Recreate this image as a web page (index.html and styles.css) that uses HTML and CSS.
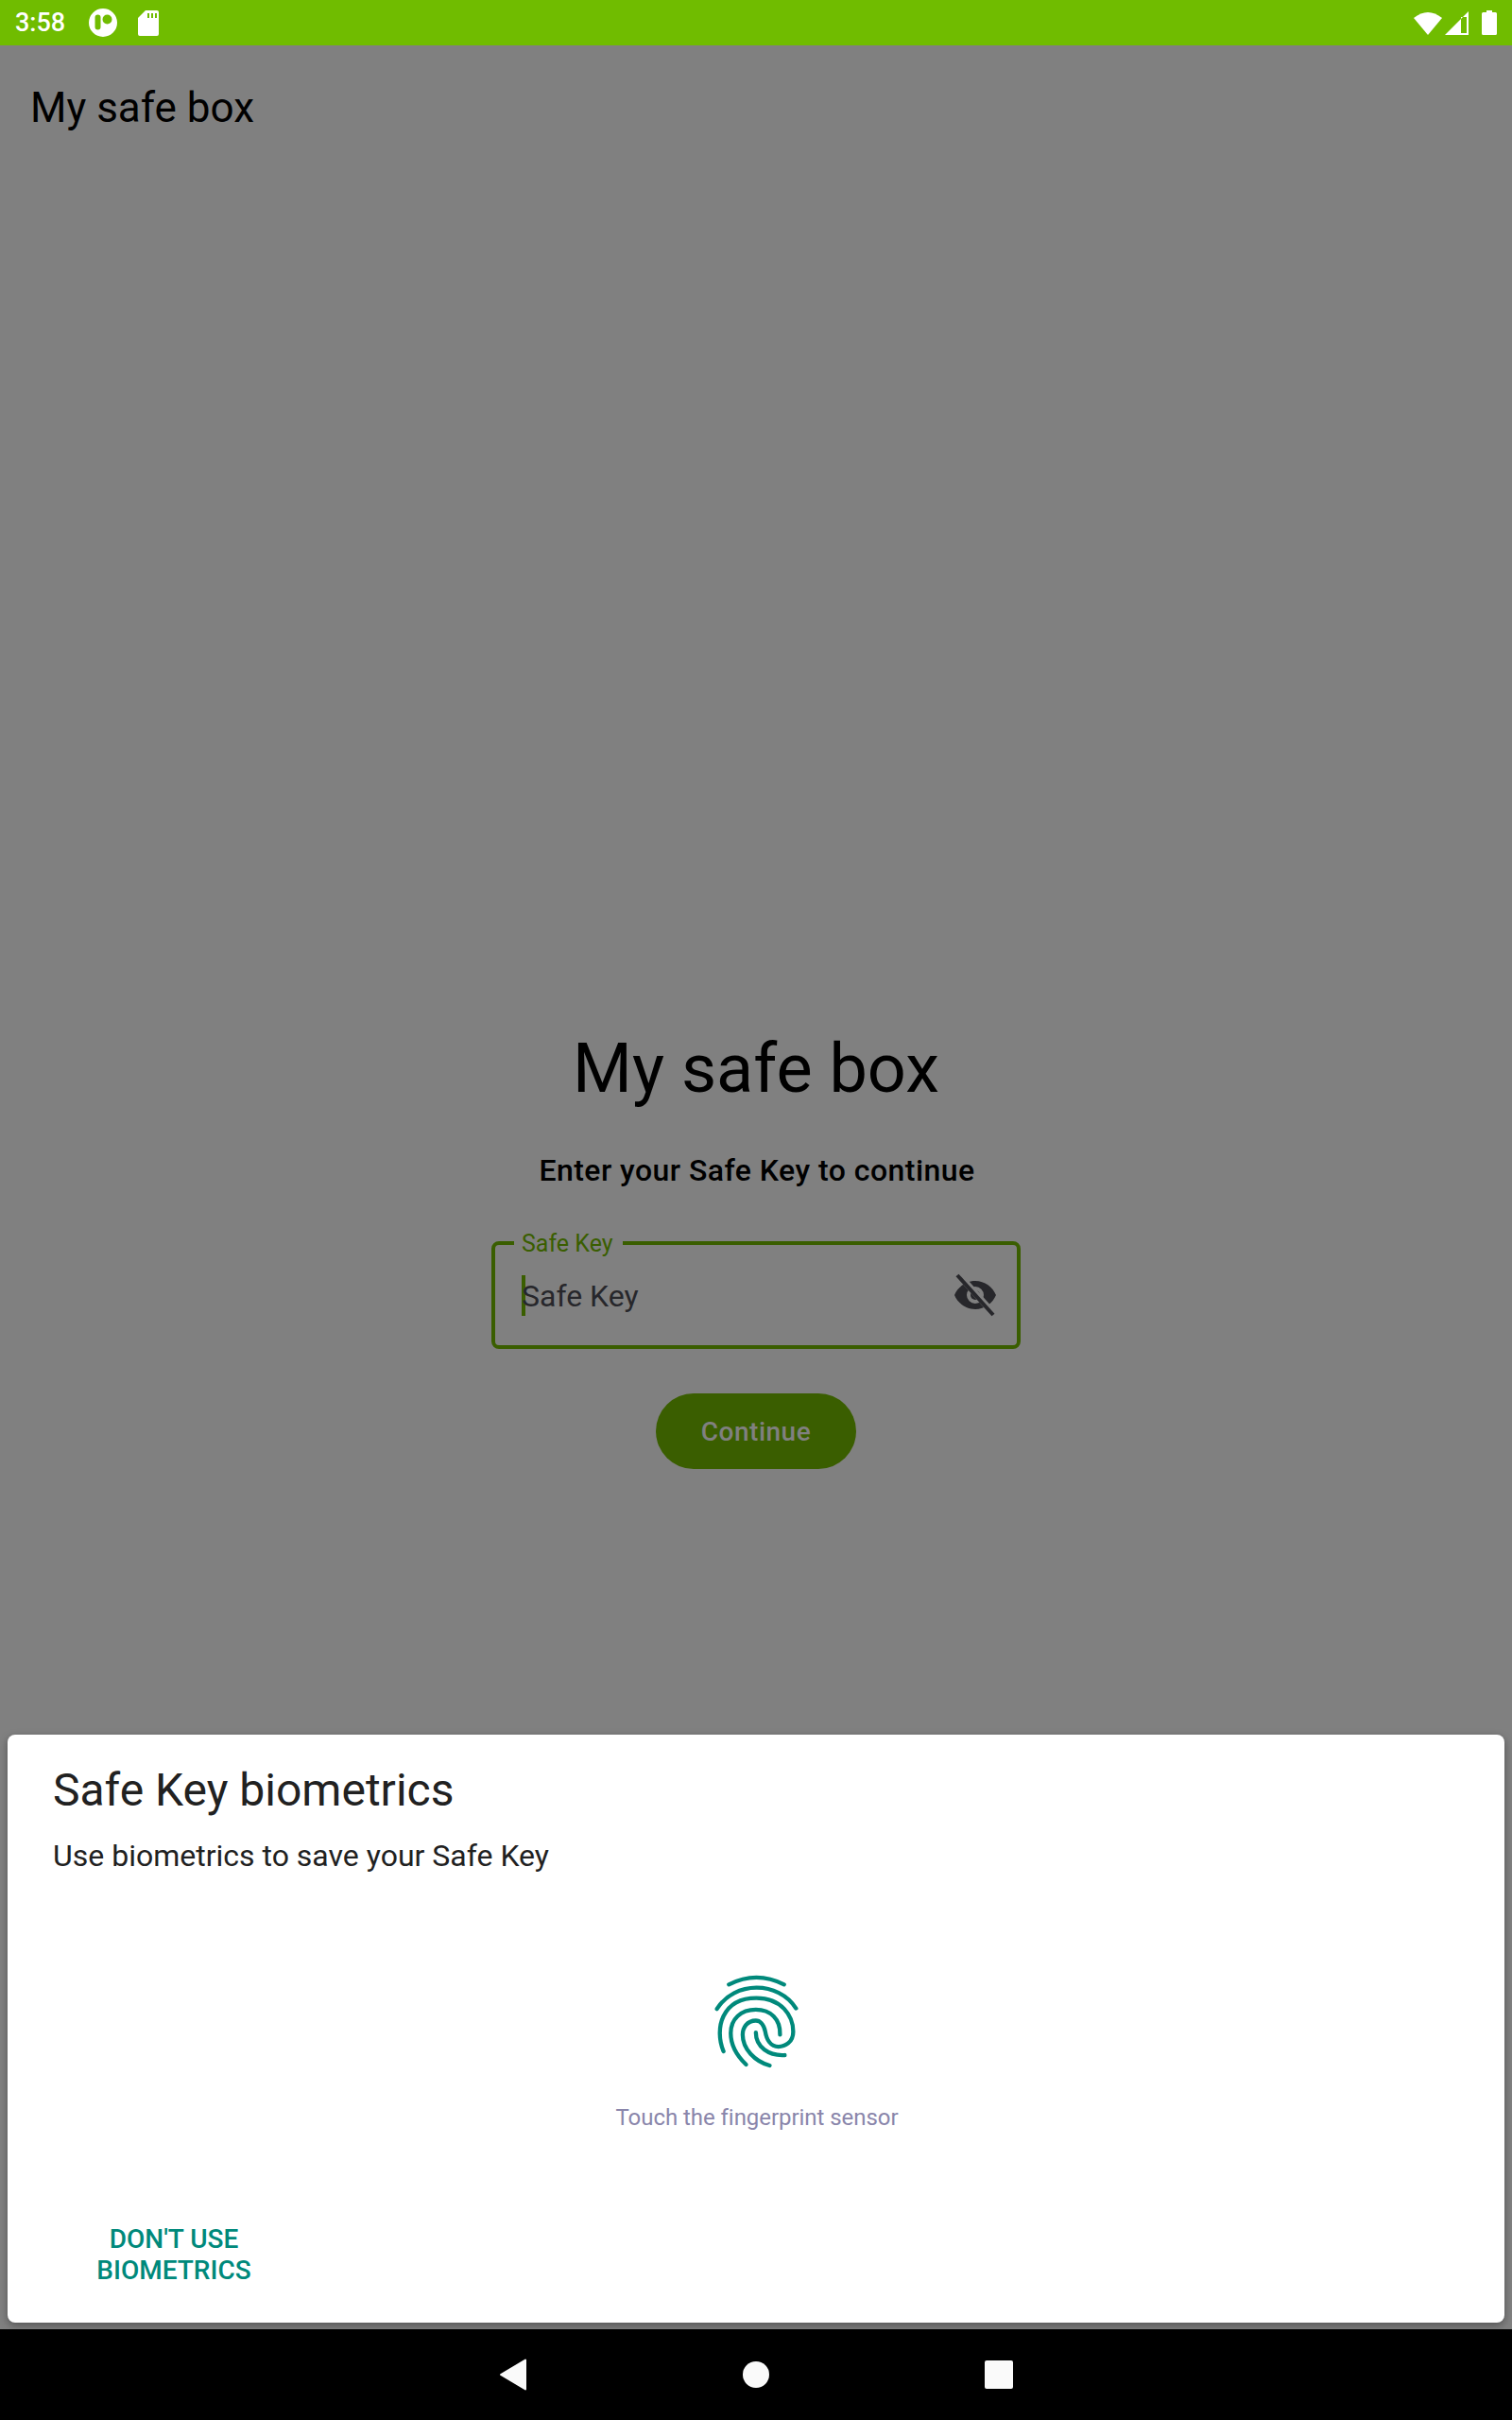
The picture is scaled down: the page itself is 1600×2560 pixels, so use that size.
FILE: index.html
```html
<!DOCTYPE html>
<html lang="en">
<head>
<meta charset="utf-8">
<title>My safe box</title>
<link rel="stylesheet" href="styles.css">
</head>
<body>
<div class="screen">
  <header class="status">
    <div class="status-left">
      <span class="clock">3:58</span>
      <svg class="ic-app" viewBox="0 0 30 30"><path fill="#fff" fill-rule="evenodd" d="M15 0a15 15 0 1 1 0 30a15 15 0 1 1 0-30zM9.500 6.500a3 3 0 0 0-3 3v10a3 3 0 0 0 6 0v-10a3 3 0 0 0-3-3zM19.500 6.500a5 5 0 1 0 0 10a5 5 0 1 0 0-10z"/></svg>
      <svg class="ic-sd" viewBox="0 0 22 27"><path fill="#fff" fill-rule="evenodd" d="M8 0H20a2 2 0 0 1 2 2V25a2 2 0 0 1-2 2H2a2 2 0 0 1-2-2V8zM10 3V8h2V3zM14 3V8h2V3zM18 3V8h2V3z"/></svg>
    </div>
    <div class="status-right">
      <svg class="ic-wifi" viewBox="0 0 30 25"><path fill="#fff" d="M0 7Q15-5 30 7L15 25z"/></svg>
      <svg class="ic-signal" viewBox="0 0 25 25"><path fill="#fff" fill-rule="evenodd" d="M25 0V25H0zM23 6H17V23H23z"/></svg>
      <svg class="ic-batt" viewBox="0 0 16 26"><path fill="#fff" d="M5 0H11V2H14.500a1.500 1.500 0 0 1 1.500 1.500V24.500a1.500 1.500 0 0 1-1.500 1.500H1.500a1.500 1.500 0 0 1-1.500-1.500V3.500a1.500 1.500 0 0 1 1.500-1.500H5z"/></svg>
    </div>
  </header>
  <main class="app">
    <div class="appbar">My safe box</div>
    <section class="login">
      <h1 class="headline">My safe box</h1>
      <p class="sub">Enter your Safe Key to continue</p>
      <div class="field">
        <span class="field-label">Safe Key</span>
        <span class="caret"></span>
        <span class="field-text">Safe Key</span>
        <svg class="ic-eye" viewBox="0 0 48 48"><path fill="#27272b" fill-rule="evenodd" d="M24 9C14 9 5.500 15.500 2 24c3.500 8.500 12 15 22 15s18.500-6.500 22-15C42.500 15.500 34 9 24 9zM24 15a9 9 0 1 1 0 18a9 9 0 1 1 0-18z"/><path fill="#27272b" d="M24 19a5 5 0 0 0-5 5a5 5 0 0 0 5 5a5 5 0 0 0 5-5a5 5 0 0 0-5-5z"/><path stroke="#808080" stroke-width="7" d="M7 3L43 43"/><path stroke="#27272b" stroke-width="4" d="M5 3L43 45"/></svg>
      </div>
      <button class="continue" type="button">Continue</button>
    </section>
    <div class="sheet">
      <h2 class="sheet-title">Safe Key biometrics</h2>
      <p class="sheet-sub">Use biometrics to save your Safe Key</p>
      <div class="sensor">
        <svg class="ic-print" viewBox="340 50 280 310" fill="none" stroke="#00897b" stroke-width="13" stroke-linecap="round">
          <path d="M392 90Q480 45 568 90"/>
          <path d="M354 168C410 78 550 78 606 166"/>
          <path d="M375 303C345 230 370 133 480 133C560 133 597 190 597 240C597 275 570 288 550 288C525 288 512 265 508 240C503 215 490 205 478 205C450 205 436 228 436 250C436 295 475 335 522 348"/>
          <path d="M447 345C410 310 398 275 398 245C398 200 430 170 478 170C525 170 557 200 555 250"/>
          <path d="M570 315C520 318 478 290 478 243"/>
        </svg>
        <p class="sensor-hint">Touch the fingerprint sensor</p>
      </div>
      <div class="sheet-actions">
        <button class="negative" type="button">DON'T USE<br>BIOMETRICS</button>
      </div>
    </div>
  </main>
  <nav class="navbar">
    <svg class="ic-back" viewBox="0 0 30 34"><path fill="#fafafa" stroke="#fafafa" stroke-width="2" stroke-linejoin="round" d="M28 1.500V32.500L2 17z"/></svg>
    <span class="ic-home"></span>
    <span class="ic-recent"></span>
  </nav>
</div>
</body>
</html>
```
FILE: styles.css
```css
* { box-sizing: border-box; }
html, body { margin: 0; padding: 0; }
body { font-family: Roboto, "Liberation Sans", sans-serif; background: #808080; }
.screen { width: 1600px; height: 2560px; display: flex; flex-direction: column; overflow: hidden; }

.status { height: 48px; flex: none; background: #70bc00; display: flex; justify-content: space-between; align-items: center; padding: 0 16px 0 16px; }
.status-left, .status-right { display: flex; align-items: center; }
.clock { color: #fff; font-size: 27px; font-weight: 500; width: 78px; }
.ic-app { width: 30px; height: 30px; margin-right: 22px; }
.ic-sd { width: 22px; height: 27px; }
.ic-wifi { width: 30px; height: 25px; margin-right: 3px; }
.ic-signal { width: 25px; height: 25px; margin-right: 14px; }
.ic-batt { width: 16px; height: 26px; }

.app { flex: 1; position: relative; background: #808080; display: flex; flex-direction: column; }
.appbar { font-size: 44px; color: #000; padding: 40px 32px 0; line-height: 52px; }
.login { display: flex; flex-direction: column; align-items: center; margin-top: 949px; }
.headline { margin: 0; font-size: 72px; font-weight: 400; color: #000; line-height: 84px; }
.sub { margin: 43px 0 0 2px; font-size: 32px; font-weight: 500; color: #000; line-height: 44px; letter-spacing: .45px; }
.field { margin-top: 53px; position: relative; width: 560px; height: 114px; border: 4px solid #3a5e00; border-radius: 8px; display: flex; align-items: center; padding: 0 20px 0 28px; }
.field-label { position: absolute; top: -15px; left: 20px; padding: 0 10px 0 8px; background: #808080; color: #3a5e00; font-size: 25px; line-height: 28px; }
.caret { width: 4px; height: 43px; background: #3a5e00; flex: none; }
.field-text { flex: 1; font-size: 32px; color: #27272b; margin-left: -4px; padding-top: 2px; }
.ic-eye { width: 48px; height: 48px; flex: none; }
.continue { margin-top: 47px; width: 212px; height: 80px; border: 0; border-radius: 40px; background: #3a5e00; color: #808080; font: 500 28px Roboto, sans-serif; letter-spacing: .5px; padding: 0; }

.sheet { position: absolute; left: 8px; right: 8px; bottom: 7px; height: 622px; background: #fff; border-radius: 8px; box-shadow: 0 3px 8px rgba(0,0,0,.35); display: flex; flex-direction: column; padding: 0 48px; }
.sheet-title { margin: 31px 0 0; font-size: 48px; font-weight: 400; color: #212121; line-height: 56px; }
.sheet-sub { margin: 21px 0 0; font-size: 32px; font-weight: 400; color: #212121; line-height: 40px; }
.sensor { display: flex; flex-direction: column; align-items: center; margin-top: 103px; }
.ic-print { width: 93px; height: 103px; }
.sensor-hint { margin: 36px 0 0 2px; font-size: 24px; font-weight: 400; color: #8a86ab; line-height: 30px; letter-spacing: -.05px; }
.sheet-actions { margin-top: auto; margin-bottom: 39px; display: flex; }
.negative { border: 0; background: none; width: 236px; margin-left: 10px; color: #00897b; font: 500 28px/33px Roboto, sans-serif; text-align: center; padding: 0; }

.navbar { height: 96px; flex: none; background: #000; display: grid; grid-template-columns: repeat(3, 257px); justify-content: center; align-items: center; justify-items: center; }
.ic-back { width: 30px; height: 34px; }
.ic-home { width: 28px; height: 28px; border-radius: 50%; background: #fafafa; }
.ic-recent { width: 30px; height: 30px; border-radius: 2px; background: #fafafa; }
```
